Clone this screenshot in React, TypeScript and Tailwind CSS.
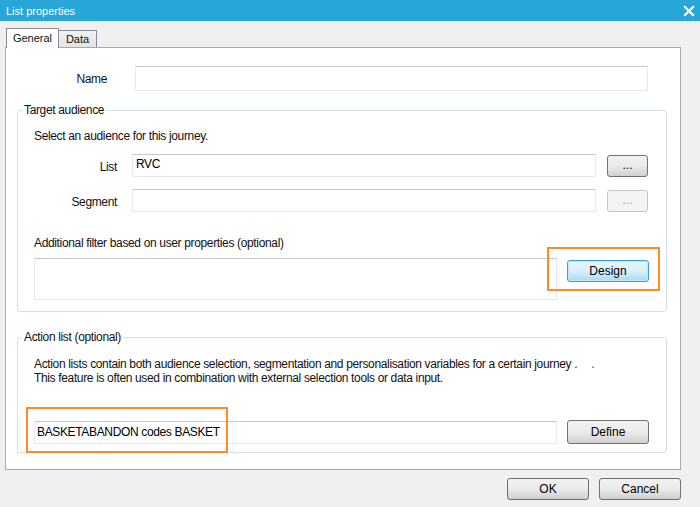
import React from "react";

const inputCls =
  "h-[23px] bg-white border border-[#e3e9ef] border-t-[#c5c9cf] text-[12px] leading-[14px] px-[3px] pt-[2px] text-black";

function WinButton({ children, className = "", disabled = false, focused = false }: { children: React.ReactNode; className?: string; disabled?: boolean; focused?: boolean }) {
  let cls = "border-[#707070] bg-gradient-to-b from-[#f2f2f2] via-[#ebebeb] to-[#cfcfcf] text-black";
  if (disabled) cls = "border-[#c5c5c5] bg-[#f4f4f4] text-[#a0a0a0]";
  if (focused) cls = "border-[#3c9fd8] bg-gradient-to-b from-[#eaf6fd] via-[#d9f0fc] to-[#a7d9f5] text-black shadow-[inset_0_0_0_1px_#c4e5f6]";
  return (
    <div className={`flex items-center justify-center rounded-[3px] border text-[12px] tracking-normal ${cls} ${className}`}>
      {children}
    </div>
  );
}

export default function App() {
  return (
    <div className="w-[700px] h-[507px] bg-[#f0f0f0] flex flex-col overflow-hidden text-[#111]" style={{ fontFamily: '"Liberation Sans", Arial, sans-serif' }}>
      {/* Title bar */}
      <div className="h-[21px] bg-[#29a6d8] flex items-center justify-between pl-[6px] pr-[4px] shrink-0">
        <span className="text-white text-[11px] leading-[14px]">List properties</span>
        <svg width="12" height="12" viewBox="0 0 12 12" className="mr-[1px]">
          <path d="M2 2 L10 10 M10 2 L2 10" stroke="white" strokeWidth="2.2" strokeLinecap="square" />
        </svg>
      </div>

      <div className="pl-[5px] pr-[19px] pt-[7px] flex flex-col">
        {/* Tabs */}
        <div className="flex items-end h-[19px] pl-[1px] relative z-10">
          <div className="w-[53px] h-[20px] -mb-[1px] bg-white border border-b-0 border-[#898c95] flex items-start justify-center pt-[3px] text-[11px] leading-[13px]">
            General
          </div>
          <div className="w-[38px] h-[17px] bg-gradient-to-b from-[#f2f2f2] to-[#e3e3e3] border border-l-0 border-b-0 border-[#898c95] flex items-center justify-center text-[11px] leading-[13px]">
            Data
          </div>
        </div>

        {/* Panel */}
        <div className="h-[423px] bg-white border border-[#a9a9a9] flex flex-col tracking-[-0.35px]">
          {/* Name row */}
          <div className="flex items-center mt-[18px]">
            <div className="w-[101px] text-right text-[12px] leading-[14px] pt-[1px]">Name</div>
            <div className={`${inputCls} ml-[28px] w-[513px] h-[25px]`} />
          </div>

          {/* Target audience */}
          <fieldset className="ml-[11px] w-[649px] mt-[12px] border border-[#d8e0e6] rounded-[3px] pl-[16px] pr-[17px] pb-[11px]">
            <legend className="text-[12px] leading-[14px] ml-[-12px] px-[2px]">Target audience</legend>
            <div className="text-[12px] leading-[14px] mt-[12px]">Select an audience for this journey.</div>
            <div className="flex items-start mt-[11px] -ml-[16px]">
              <div className="w-[99px] text-right text-[12px] leading-[14px] pt-[6px]">List</div>
              <div className={`${inputCls} ml-[15px] w-[464px]`}>RVC</div>
              <WinButton className="ml-[11px] w-[41px] h-[22px] mt-[1px] leading-none pb-[3px]">...</WinButton>
            </div>
            <div className="flex items-start mt-[12px] -ml-[16px]">
              <div className="w-[99px] text-right text-[12px] leading-[14px] pt-[6px]">Segment</div>
              <div className={`${inputCls} ml-[15px] w-[464px]`} />
              <WinButton disabled className="ml-[11px] w-[41px] h-[22px] mt-[1px] leading-none pb-[3px]">...</WinButton>
            </div>
            <div className="text-[12px] leading-[14px] mt-[24px]">Additional filter based on user properties (optional)</div>
            <div className="flex items-start mt-[8px]">
              <div className="w-[523px] h-[42px] bg-white border border-[#e3e9ef] border-t-[#c5c9cf]" />
              <div className="relative ml-[10px] mt-[2px]">
                <WinButton focused className="w-[82px] h-[22px]">Design</WinButton>
                <div className="absolute left-[-20px] top-[-13px] w-[113px] h-[44px] border-2 border-[#fe8a2c] pointer-events-none" />
              </div>
            </div>
          </fieldset>

          {/* Action list */}
          <fieldset className="ml-[11px] w-[649px] mt-[18px] border border-[#d8e0e6] rounded-[3px] pl-[16px] pr-[17px] pb-[8px]">
            <legend className="text-[12px] leading-[14px] ml-[-12px] px-[2px]">Action list (optional)</legend>
            <div className="text-[12px] leading-[14px] mt-[13px] whitespace-nowrap">
              Action lists contain both audience selection, segmentation and personalisation variables for a certain journey .
              <span className="ml-[14px] text-[#333]">.</span>
            </div>
            <div className="text-[12px] leading-[14px] whitespace-nowrap">
              This feature is often used in combination with external selection tools or data input.
            </div>
            <div className="flex items-center mt-[35px]">
              <div className="relative">
                <div className={`${inputCls} w-[523px] h-[22px] pt-[3px] pl-[2px]`}>BASKETABANDON codes BASKET</div>
                <div className="absolute left-[-8px] top-[-14px] w-[202px] h-[46px] border-2 border-[#fe8a2c] pointer-events-none" />
              </div>
              <WinButton className="ml-[10px] w-[82px] h-[24px]">Define</WinButton>
            </div>
          </fieldset>
        </div>

        {/* Bottom buttons */}
        <div className="flex justify-end gap-[10px] mt-[8px] -mr-[19px] pr-[19px]">
          <WinButton className="w-[82px] h-[22px]">OK</WinButton>
          <WinButton className="w-[82px] h-[22px]">Cancel</WinButton>
        </div>
      </div>
    </div>
  );
}
